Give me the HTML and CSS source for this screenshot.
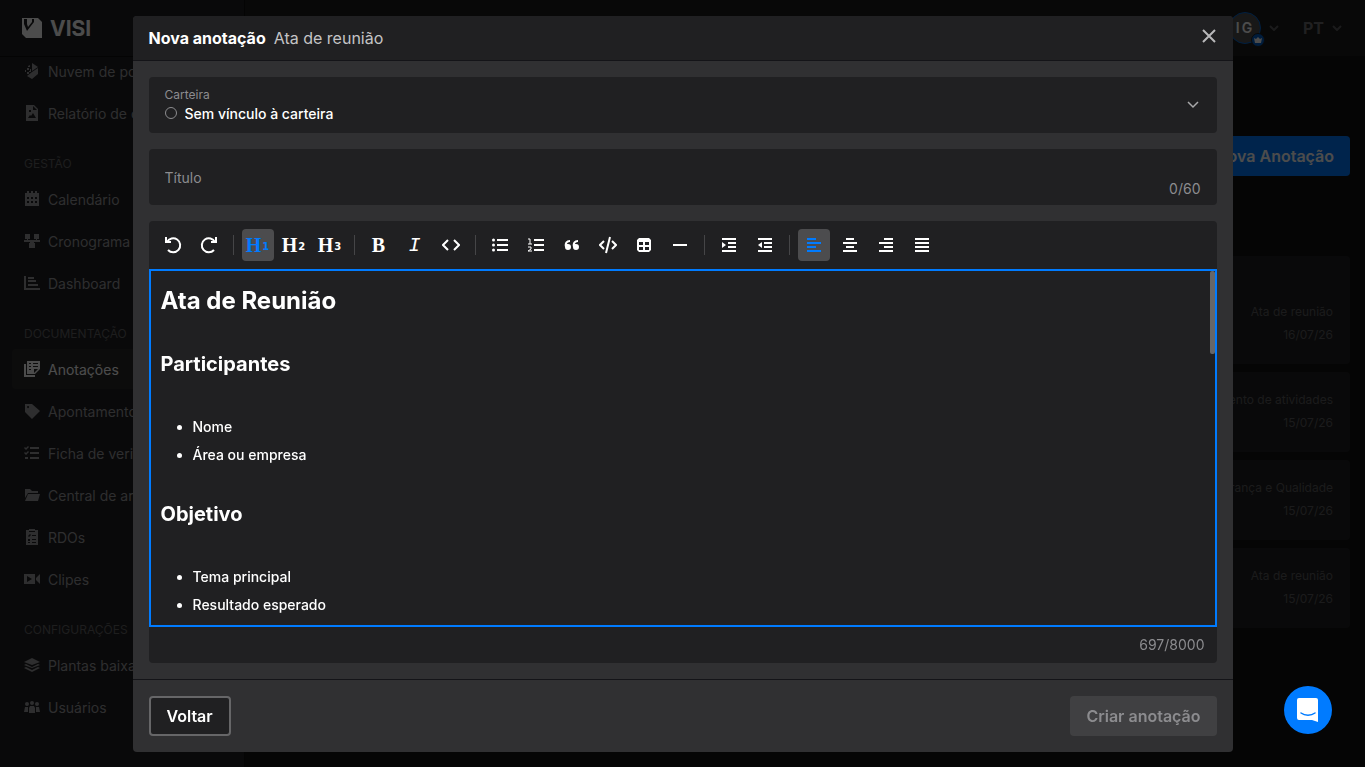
FILE: index.html
```
<!DOCTYPE html>
<html lang="pt">
<head>
  <meta charset="utf-8">
  <meta name="viewport" content="width=device-width, initial-scale=1">
  <title>VISI - Nova anotação</title>
  <link rel="stylesheet" href="styles.css">
</head>
<body>
  <div class="app">
    <aside class="sidebar">
      <div class="brand">
        <svg width="20" height="20" viewBox="0 0 20 20"><path fill="currentColor" fill-rule="evenodd" d="M0 0h16l4 4v16H4l-4-4zM2 1v5l3 7 7-9V1h-2v3L6 9 5 6V1z"/></svg>
        <span>VISI</span>
      </div>
      <nav class="nav">
        <a href="#"><svg viewBox="0 0 16 16"><path d="M8 0l6 4-6 4zM14 5v6l-6 5-5-3 5-4zM6 2v2H4V3zM3 5h2v2H3zM6 6h1v3H5V8h1zM1 7h1v2H1zM3 9h2v2H3z"/></svg>Nuvem de pontos</a>
        <a href="#"><svg viewBox="0 0 16 16"><path fill-rule="evenodd" d="M2 0h8l4 4v12H2zM9 1v4h4zM4 13h8L9 8l-2 3-1-1zM5 5v2h2V5z"/></svg>Relatório de obra</a>
        <h3>GESTÃO</h3>
        <a href="#"><svg viewBox="0 0 16 16"><path fill-rule="evenodd" d="M3 0h2v2h2V0h2v2h2V0h2v2h2v13H1V2h2zM3 6v2h2V6zm4 0v2h2V6zm4 0v2h2V6zM3 10v2h2v-2zm4 0v2h2v-2zm4 0v2h2v-2z"/></svg>Calendário</a>
        <a href="#"><svg viewBox="0 0 16 16"><path d="M1 1h5v5H4v1h8V6h-2V1h5v5h-2v1h3v2h-6v1h1v5H5v-5h1V9H0V7h3V6H1z"/></svg>Cronograma</a>
        <a href="#"><svg viewBox="0 0 16 16"><path d="M0 1h2v12h14v2H0zM4 2h6v2H4zM4 5h8v2H4zM4 9h10v2H4z"/></svg>Dashboard</a>
        <h3>DOCUMENTAÇÃO</h3>
        <a href="#" class="active"><svg viewBox="0 0 16 16"><path fill-rule="evenodd" d="M3 0h13v8l-5 5H3zM5 2v1h2V2zm4 0v1h5V2zM5 5v1h2V5zm4 0v1h5V5zM5 8v1h2V8zm5 0v4l4-4h-4zM0 3h2v11h9v2H0z"/></svg>Anotações</a>
        <a href="#"><svg viewBox="0 0 16 16"><path fill-rule="evenodd" d="M1 1h7l8 7-8 8-7-7zM4 3a1 1 0 1 0 .1 0z"/></svg>Apontamentos</a>
        <a href="#"><svg viewBox="0 0 16 16"><path d="M6 2h9v2H6zM6 7h9v2H6zM6 12h9v2H6zM1 12h3v2H1zM0 3l1-1 1 1 2-2 1 1-3 3zM0 8l1-1 1 1 2-2 1 1-3 3z"/></svg>Ficha de verificação</a>
        <a href="#"><svg viewBox="0 0 16 16"><path d="M1 2h5l2 2h6v2H4l-3 5zM4 7h12l-2 7H1z"/></svg>Central de arquivos</a>
        <a href="#"><svg viewBox="0 0 16 16"><path fill-rule="evenodd" d="M2 1h3V0h6v1h3v15H2zM5 2v1h6V2zM4 7l1 1 2-2-1-1-1 1zm4-1v1h4V6zM4 10v2h2v-2zm4 0v1h4v-1zM4 13v1h2v-1zm4 0v1h4v-1z"/></svg>RDOs</a>
        <a href="#"><svg viewBox="0 0 16 16"><path fill-rule="evenodd" d="M0 3h11v10H0zM3 5v6l5-3zM16 3v10l-4-4V7z"/></svg>Clipes</a>
        <h3>CONFIGURAÇÕES</h3>
        <a href="#"><svg viewBox="0 0 16 16"><path d="M8 1l8 4-8 3-8-3zM2 7l6 3 6-3 2 1-8 3-8-3zM2 10l6 3 6-3 2 1-8 4-8-4z"/></svg>Plantas baixas</a>
        <a href="#"><svg viewBox="0 0 16 16"><circle cx="8" cy="4" r="2"/><circle cx="3" cy="5" r="2"/><circle cx="13" cy="5" r="2"/><path d="M5 14V9l1-2h4l1 2v5zM0 13l1-5h3v5zM16 13l-1-5h-3v5z"/></svg>Usuários</a>
      </nav>
    </aside>

    <div class="page">
      <header class="topbar">
        <div class="avatar">IG
          <span class="badge"><svg width="8" height="8" viewBox="0 0 8 8"><path fill="#fff" d="M0 2l2 1 2-2 2 2 2-1-1 5H1z"/></svg></span>
        </div>
        <svg class="caret" width="10" height="6" viewBox="0 0 10 6"><path d="M1 1l4 4 4-4"/></svg>
        <span class="lang">PT</span>
        <svg class="caret" width="10" height="6" viewBox="0 0 10 6"><path d="M1 1l4 4 4-4"/></svg>
      </header>
      <main class="notes">
        <button class="btn-new" type="button">Nova Anotação</button>
        <div class="note tall"><span>Ata de reunião</span><span>16/07/26</span></div>
        <div class="note"><span>Apontamento de atividades</span><span>15/07/26</span></div>
        <div class="note"><span>Segurança e Qualidade</span><span>15/07/26</span></div>
        <div class="note"><span>Ata de reunião</span><span>15/07/26</span></div>
      </main>
    </div>
  </div>

  <div class="overlay">
    <section class="modal" role="dialog" aria-labelledby="modal-title">
      <header class="modal-header">
        <h2 id="modal-title">Nova anotação</h2>
        <span>Ata de reunião</span>
        <button class="close" type="button" aria-label="Fechar">
          <svg width="14" height="14" viewBox="0 0 14 14"><path d="M1 1l12 12M13 1L1 13"/></svg>
        </button>
      </header>

      <div class="modal-body">
        <div class="field">
          <div class="field-main">
            <label for="carteira">Carteira</label>
            <div class="select-row">
              <span class="ring"></span>
              <select id="carteira"><option>Sem vínculo à carteira</option></select>
            </div>
          </div>
          <svg class="chevron" width="12" height="8" viewBox="0 0 12 8"><path d="M1 1l5 5 5-5"/></svg>
        </div>

        <div class="field">
          <input type="text" placeholder="Título" aria-label="Título" maxlength="60">
          <span class="count">0/60</span>
        </div>

        <div class="editor">
          <div class="toolbar">
            <button type="button" aria-label="Desfazer"><svg viewBox="0 0 18 18"><path class="line" d="M3 6a7 7 0 1 1 1 8"/><path d="M1 1h2v4h4v2H1z"/></svg></button>
            <button type="button" aria-label="Refazer"><svg viewBox="0 0 18 18"><path class="line" d="M15 6a7 7 0 1 0-1 8"/><path d="M17 1h-2v4h-4v2h6z"/></svg></button>
            <i class="sep"></i>
            <button type="button" class="letter on">H<small>1</small></button>
            <button type="button" class="letter">H<small>2</small></button>
            <button type="button" class="letter">H<small>3</small></button>
            <i class="sep"></i>
            <button type="button" class="letter">B</button>
            <button type="button" class="letter italic">I</button>
            <button type="button" aria-label="Código"><svg viewBox="0 0 18 18"><path class="line" d="M6 4L1 9l5 5M12 4l5 5-5 5"/></svg></button>
            <i class="sep"></i>
            <button type="button" aria-label="Lista"><svg viewBox="0 0 18 18"><path d="M6 3h11v2H6zM6 8h11v2H6zM6 13h11v2H6z"/><circle cx="2.500" cy="4" r="1.500"/><circle cx="2.500" cy="9" r="1.500"/><circle cx="2.500" cy="14" r="1.500"/></svg></button>
            <button type="button" aria-label="Lista numerada"><svg viewBox="0 0 18 18"><path d="M7 3h10v2H7zM7 8h10v2H7zM7 13h10v2H7z"/><path class="thin" d="M1 3h2v5M1 8h4M1 11h3v2l-3 2h4"/></svg></button>
            <button type="button" aria-label="Citação"><svg viewBox="0 0 18 18"><path d="M7 4v2C5 6 4 7 4 8h1a3 3 0 1 1-3 3C1 7 3 4 7 4zM15 4v2c-2 0-3 1-3 2h1a3 3 0 1 1-3 3c-1-4 1-7 5-7z"/></svg></button>
            <button type="button" aria-label="Bloco de código"><svg viewBox="0 0 18 18"><path class="line" d="M5 5L1 9l4 4M13 5l4 4-4 4M11 1L7 17"/></svg></button>
            <button type="button" aria-label="Tabela"><svg viewBox="0 0 18 18"><path fill-rule="evenodd" d="M4 2h10l2 2v10l-2 2H4l-2-2V4zM4 6v3h4V6zm6 0v3h4V6zM4 11v3h4v-3zm6 0v3h4v-3z"/></svg></button>
            <button type="button" aria-label="Linha"><svg viewBox="0 0 18 18"><path d="M2 8h14v2H2z"/></svg></button>
            <i class="sep"></i>
            <button type="button" aria-label="Aumentar recuo"><svg viewBox="0 0 18 18"><path d="M2 2h14v2H2zM8 6h8v2H8zM8 10h8v2H8zM2 14h14v2H2zM2 6l4 3-4 3z"/></svg></button>
            <button type="button" aria-label="Diminuir recuo"><svg viewBox="0 0 18 18"><path d="M2 2h14v2H2zM8 6h8v2H8zM8 10h8v2H8zM2 14h14v2H2zM6 6L2 9l4 3z"/></svg></button>
            <i class="sep"></i>
            <button type="button" class="on" aria-label="Alinhar à esquerda"><svg viewBox="0 0 18 18"><path d="M2 2h9v2H2zM2 6h14v2H2zM2 10h9v2H2zM2 14h14v2H2z"/></svg></button>
            <button type="button" aria-label="Centralizar"><svg viewBox="0 0 18 18"><path d="M5 2h8v2H5zM2 6h14v2H2zM5 10h8v2H5zM2 14h14v2H2z"/></svg></button>
            <button type="button" aria-label="Alinhar à direita"><svg viewBox="0 0 18 18"><path d="M7 2h9v2H7zM2 6h14v2H2zM7 10h9v2H7zM2 14h14v2H2z"/></svg></button>
            <button type="button" aria-label="Justificar"><svg viewBox="0 0 18 18"><path d="M2 2h14v2H2zM2 6h14v2H2zM2 10h14v2H2zM2 14h14v2H2z"/></svg></button>
          </div>
          <div class="content-wrap">
            <div class="content" contenteditable="true" spellcheck="false">
              <h1>Ata de Reunião</h1>
              <h2>Participantes</h2>
              <ul>
                <li>Nome</li>
                <li>Área ou empresa</li>
              </ul>
              <h2>Objetivo</h2>
              <ul>
                <li>Tema principal</li>
                <li>Resultado esperado</li>
              </ul>
            </div>
            <div class="thumb"></div>
          </div>
          <div class="editor-count">697/8000</div>
        </div>
      </div>

      <footer class="modal-footer">
        <button class="btn-back" type="button">Voltar</button>
        <button class="btn-create" type="button" disabled>Criar anotação</button>
      </footer>
    </section>
  </div>

  <button class="chat" type="button" aria-label="Chat">
    <svg width="24" height="26" viewBox="0 0 24 26"><path fill="#fff" d="M3 1h17a2 2 0 0 1 2 2v22l-6-2H3a2 2 0 0 1-2-2V3a2 2 0 0 1 2-2z"/><path fill="none" stroke="#007bff" stroke-width="1.500" stroke-linecap="round" d="M5 16c4 3 10 3 14 0"/></svg>
  </button>
</body>
</html>
```
FILE: styles.css
```
:root {
  --blue: #007bff;
  --panel: #202022;
  --surface: #303032;
  --muted: #8c8c8f;
}

* {
  box-sizing: border-box;
}

body {
  margin: 0;
  height: 100vh;
  overflow: hidden;
  background: #131313;
  color: #fff;
  font-family: Inter, "Liberation Sans", sans-serif;
  font-size: 14px;
}

button, input, select {
  font: inherit;
  color: inherit;
  border: 0;
  margin: 0;
  padding: 0;
  background: none;
}

h1, h2, h3, ul {
  margin: 0;
  padding: 0;
}

/* page behind the dialog */
.app {
  display: flex;
  height: 100vh;
}

.sidebar {
  width: 245px;
  flex: none;
  overflow: hidden;
  background: var(--panel);
  border-right: 1px solid #101010;
}

.brand {
  position: relative;
  z-index: 1;
  display: flex;
  align-items: center;
  gap: 8px;
  height: 57px;
  padding-left: 22px;
  background: var(--panel);
  border-bottom: 1px solid #101010;
  font-size: 21px;
  font-weight: 700;
}

.nav {
  display: flex;
  flex-direction: column;
  gap: 2px;
  margin-top: -6px;
  padding: 0 12px;
}

.nav a {
  display: flex;
  align-items: center;
  gap: 8px;
  height: 40px;
  padding: 0 12px;
  border-radius: 4px;
  color: #9a9a9e;
  text-decoration: none;
  white-space: nowrap;
}

.nav svg {
  width: 16px;
  height: 16px;
  flex: none;
  fill: currentColor;
}

.nav a.active {
  background: #29292b;
  color: #fff;
}

.nav h3 {
  height: 42px;
  padding: 14px 12px 0;
  color: #646467;
  font-size: 12px;
  font-weight: 400;
  line-height: 30px;
}

.page {
  flex: 1;
}

.topbar {
  display: flex;
  align-items: center;
  justify-content: flex-end;
  height: 56px;
  padding-right: 23px;
  background: #1b1b1b;
}

.avatar {
  position: relative;
  width: 32px;
  height: 32px;
  border: 1px solid #0068d8;
  border-radius: 50%;
  background: #505052;
  line-height: 30px;
  text-align: center;
  letter-spacing: 2px;
  font-weight: 600;
}

.badge {
  position: absolute;
  right: -5px;
  bottom: -4px;
  display: flex;
  align-items: center;
  justify-content: center;
  width: 14px;
  height: 14px;
  border: 1px solid var(--panel);
  border-radius: 50%;
  background: #0060c8;
}

.caret {
  margin-left: 8px;
  fill: none;
  stroke: #5c5c5e;
  stroke-width: 2;
}

.lang {
  margin-left: 24px;
  color: #6c6c6e;
  font-size: 16px;
  font-weight: 700;
}

.notes {
  display: flex;
  flex-direction: column;
  gap: 8px;
  padding: 80px 15px 0;
}

.btn-new {
  align-self: flex-end;
  height: 40px;
  margin-bottom: 72px;
  padding: 0 16px;
  border-radius: 4px;
  background: var(--blue);
  font-size: 16px;
  font-weight: 600;
}

.note {
  display: flex;
  flex-direction: column;
  justify-content: flex-end;
  min-height: 80px;
  padding: 16px 17px 18px;
  border-radius: 4px;
  background: var(--panel);
  color: #5c5c5e;
  font-size: 12px;
  line-height: 23px;
  text-align: right;
}

.note.tall {
  min-height: 108px;
}

/* dialog */
.overlay {
  position: fixed;
  inset: 0;
  z-index: 10;
  display: flex;
  align-items: flex-start;
  justify-content: center;
  padding: 16px;
  background: rgba(0, 0, 0, 0.7);
}

.modal {
  display: flex;
  flex-direction: column;
  width: 100%;
  max-width: 1100px;
  height: 96vh;
  border-radius: 4px;
  background: var(--surface);
  overflow: hidden;
}

.modal-header {
  display: flex;
  align-items: center;
  gap: 8px;
  height: 45px;
  flex: none;
  padding: 0 16px;
  background: var(--panel);
  border-bottom: 1px solid #141418;
  font-size: 16px;
}

.modal-header h2 {
  font-size: 16px;
  font-weight: 700;
}

.modal-header span {
  color: #c4c4c6;
}

.close {
  display: flex;
  align-items: center;
  justify-content: center;
  width: 16px;
  height: 24px;
  margin: 0 0 4px auto;
}

.close path {
  fill: none;
  stroke: #b8b8ba;
  stroke-width: 2;
}

.modal-body {
  display: flex;
  flex-direction: column;
  flex: 1;
  gap: 16px;
  min-height: 0;
  padding: 16px;
}

.field {
  display: flex;
  align-items: center;
  height: 56px;
  flex: none;
  padding: 0 16px;
  border-radius: 4px;
  background: var(--panel);
}

.field-main {
  flex: 1;
}

.field label {
  display: block;
  color: var(--muted);
  font-size: 12px;
  line-height: 16px;
}

.select-row {
  display: flex;
  align-items: center;
  gap: 8px;
}

.ring {
  width: 12px;
  height: 12px;
  border: 1px solid var(--muted);
  border-radius: 50%;
}

.field select {
  flex: 1;
  height: 20px;
  appearance: none;
  outline: 0;
  font-weight: 500;
}

.chevron {
  margin-right: 2px;
  fill: none;
  stroke: #a8a8aa;
  stroke-width: 1.5;
}

.field input {
  flex: 1;
  height: 56px;
  outline: 0;
}

.field input::placeholder {
  color: var(--muted);
  opacity: 1;
}

.count {
  align-self: flex-end;
  padding-bottom: 6px;
  color: var(--muted);
  line-height: 20px;
}

.editor {
  display: flex;
  flex-direction: column;
  flex: 1;
  min-height: 0;
  border-radius: 4px;
  background: var(--panel);
}

.toolbar {
  display: flex;
  align-items: center;
  gap: 4px;
  height: 48px;
  flex: none;
  padding: 0 8px;
}

.toolbar button {
  display: flex;
  align-items: center;
  justify-content: center;
  width: 32px;
  height: 32px;
  border-radius: 4px;
}

.toolbar button.on {
  background: #4c4c4e;
  color: var(--blue);
}

.toolbar svg {
  width: 18px;
  height: 18px;
  fill: currentColor;
}

.toolbar .line, .toolbar .thin {
  fill: none;
  stroke: currentColor;
  stroke-width: 2;
}

.toolbar .thin {
  stroke-width: 1;
}

.toolbar .letter {
  gap: 1px;
  font-family: "Liberation Serif", serif;
  font-size: 20px;
  font-weight: 700;
}

.toolbar .letter small {
  margin-top: 3px;
  font-family: "DejaVu Sans", sans-serif;
  font-size: 10px;
}

.toolbar .italic {
  font-family: "Liberation Mono", monospace;
  font-style: italic;
  font-weight: 400;
}

.sep {
  width: 1px;
  height: 20px;
  margin: 0 4px;
  background: #454547;
}

.content-wrap {
  position: relative;
  flex: 1;
  min-height: 0;
  border: 2px solid var(--blue);
}

.content {
  height: 100%;
  overflow-y: auto;
  padding: 12px 10px 0;
  outline: 0;
  scrollbar-width: none;
}

.content h1 {
  font-size: 24px;
  line-height: 36px;
}

.content h2 {
  margin: 29px 0 33px;
  font-size: 20px;
  line-height: 32px;
}

.content ul {
  padding-left: 32px;
}

.content li {
  font-weight: 500;
  line-height: 28px;
}

.thumb {
  position: absolute;
  top: 0;
  right: 0;
  width: 5px;
  height: 83px;
  border-radius: 2px;
  background: #666668;
}

.editor-count {
  padding: 8px 12px;
  color: var(--muted);
  line-height: 20px;
  text-align: right;
}

.modal-footer {
  display: flex;
  justify-content: space-between;
  flex: none;
  padding: 16px;
  border-top: 1px solid #141418;
}

.modal-footer button {
  height: 40px;
  padding: 0 16px;
  border-radius: 4px;
  font-size: 16px;
  font-weight: 600;
}

.modal-footer .btn-back {
  border: 2px solid #666668;
  background: var(--panel);
}

.modal-footer .btn-create {
  background: #404042;
  color: var(--muted);
}

.chat {
  position: fixed;
  z-index: 20;
  right: 33px;
  bottom: 33px;
  display: flex;
  align-items: center;
  justify-content: center;
  width: 48px;
  height: 48px;
  border-radius: 50%;
  background: var(--blue);
}
```
